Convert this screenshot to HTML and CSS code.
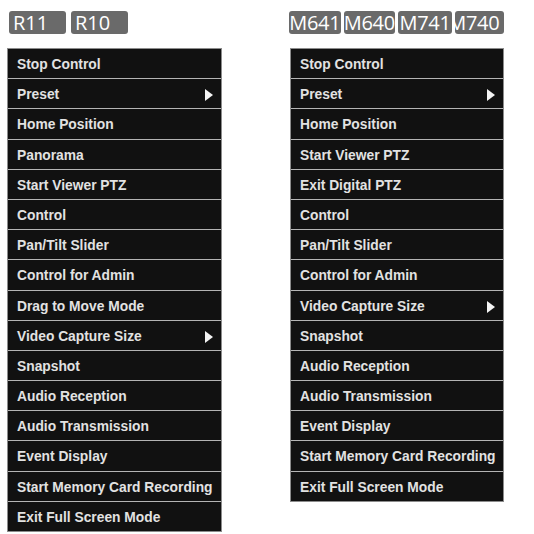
FILE: index.html
```html
<!DOCTYPE html>
<html>
<head>
<meta charset="utf-8">
<link rel="stylesheet" href="styles.css">
</head>
<body>
<div class="page">
  <div class="col col-left">
    <div class="badges">
      <span class="badge badge-r">R11</span>
      <span class="badge badge-r">R10</span>
    </div>
    <ul class="menu">
      <li class="item">Stop Control</li>
      <li class="item has-sub">Preset<span class="arrow"></span></li>
      <li class="item">Home Position</li>
      <li class="item">Panorama</li>
      <li class="item">Start Viewer PTZ</li>
      <li class="item">Control</li>
      <li class="item">Pan/Tilt Slider</li>
      <li class="item">Control for Admin</li>
      <li class="item">Drag to Move Mode</li>
      <li class="item has-sub">Video Capture Size<span class="arrow"></span></li>
      <li class="item">Snapshot</li>
      <li class="item">Audio Reception</li>
      <li class="item">Audio Transmission</li>
      <li class="item">Event Display</li>
      <li class="item">Start Memory Card Recording</li>
      <li class="item">Exit Full Screen Mode</li>
    </ul>
  </div>
  <div class="col col-right">
    <div class="badges badges-m">
      <span class="badge badge-m">M641</span>
      <span class="badge badge-m">M640</span>
      <span class="badge badge-m badge-m3">M741</span>
      <span class="badge badge-m badge-clip"><span class="clip-text">M740</span></span>
    </div>
    <ul class="menu">
      <li class="item">Stop Control</li>
      <li class="item has-sub">Preset<span class="arrow"></span></li>
      <li class="item">Home Position</li>
      <li class="item">Start Viewer PTZ</li>
      <li class="item">Exit Digital PTZ</li>
      <li class="item">Control</li>
      <li class="item">Pan/Tilt Slider</li>
      <li class="item">Control for Admin</li>
      <li class="item has-sub">Video Capture Size<span class="arrow"></span></li>
      <li class="item">Snapshot</li>
      <li class="item">Audio Reception</li>
      <li class="item">Audio Transmission</li>
      <li class="item">Event Display</li>
      <li class="item">Start Memory Card Recording</li>
      <li class="item">Exit Full Screen Mode</li>
    </ul>
  </div>
</div>
</body>
</html>
```
FILE: styles.css
```css
html, body {
  margin: 0;
  padding: 0;
  background: #ffffff;
}
.page {
  display: flex;
  padding-left: 7px;
}
.col-left {
  width: 215px;
}
.col-right {
  width: 214px;
  margin-left: 68px;
}
.badges {
  display: flex;
  gap: 5px;
  margin-top: 11px;
  height: 23px;
  padding-left: 2px;
}
.badges-m {
  gap: 3px;
  padding-left: 0;
  margin-left: -1px;
}
.badge {
  display: flex;
  align-items: center;
  height: 23px;
  background: #6a6a6a;
  border-radius: 3px;
  color: #ffffff;
  font-family: "Open Sans", "Noto Sans", sans-serif;
  font-size: 20px;
  line-height: 23px;
  box-sizing: border-box;
  white-space: nowrap;
}
.badge-r {
  width: 57px;
  padding-left: 4px;
}
.badge-m {
  width: 57px;
  justify-content: center;
  letter-spacing: -0.3px;
}
.badge-m3 {
  width: 60px;
}
.badge-clip {
  width: 54px;
  justify-content: flex-start;
  overflow: hidden;
}
.clip-text {
  display: block;
  margin-left: -7px;
}
.menu {
  list-style: none;
  margin: 14px 0 0 0;
  padding: 0;
  background: #121212;
  border: 1px solid #8c8c8c;
}
.item {
  position: relative;
  line-height: 29px;
  padding-left: 9px;
  padding-top: 1px;
  box-sizing: border-box;
  height: 30.2px;
  border-top: 1px solid #b4b4b4;
  color: #e2e2e2;
  font-family: "Liberation Sans", Arial, sans-serif;
  font-weight: bold;
  font-size: 13.8px;
  white-space: nowrap;
  background: #111111;
}
.item:first-child {
  border-top: none;
  height: 29.2px;
}
.arrow {
  position: absolute;
  right: 8px;
  top: 10px;
  width: 0;
  height: 0;
  border-top: 6px solid transparent;
  border-bottom: 6px solid transparent;
  border-left: 8px solid #f4f4f4;
}
```
